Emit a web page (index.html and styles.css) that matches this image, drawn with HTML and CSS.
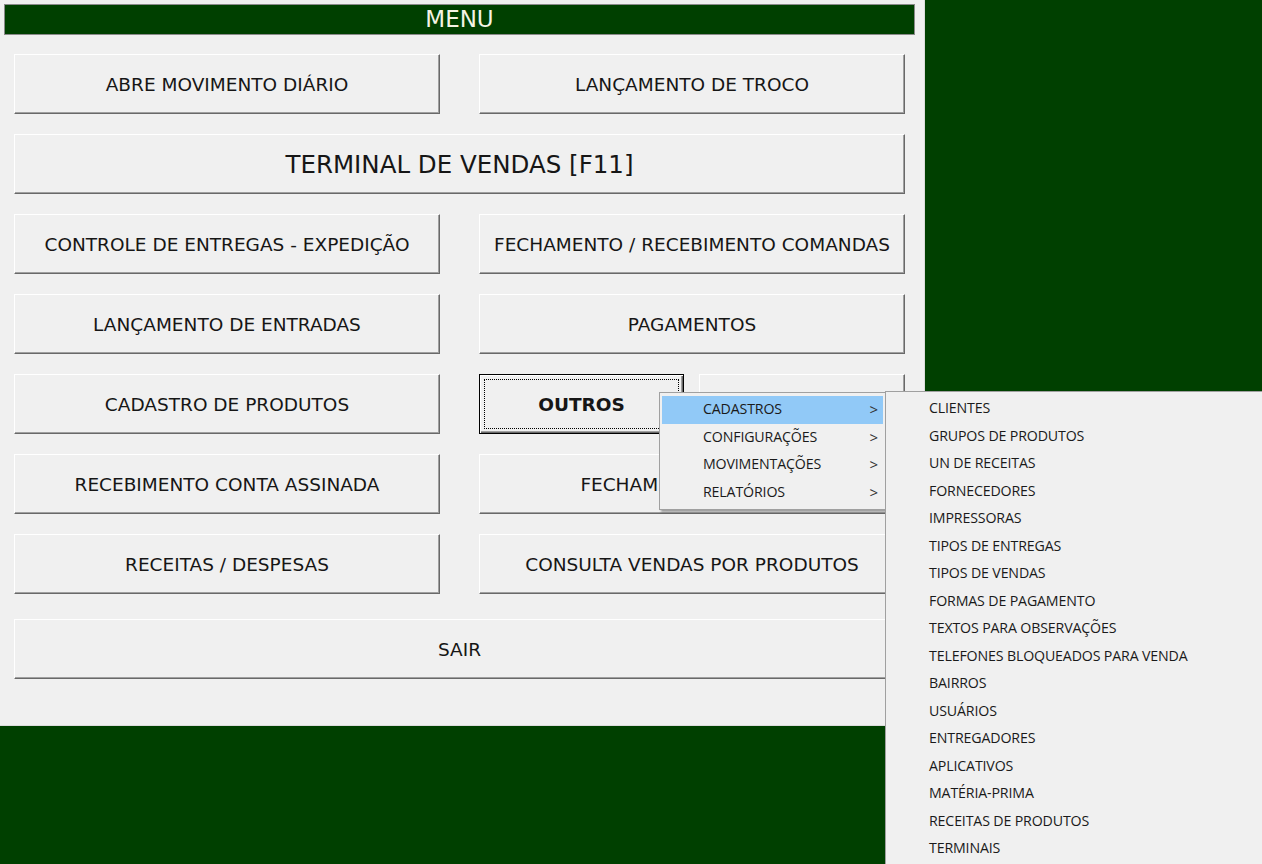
FILE: index.html
```html
<!DOCTYPE html>
<html lang="pt-BR">
<head>
<meta charset="utf-8">
<title>MENU</title>
<link rel="stylesheet" href="styles.css">
</head>
<body>
<div class="form">
  <div class="title">MENU</div>
  <div class="buttons">
    <div class="row">
      <button class="btn">ABRE MOVIMENTO DIÁRIO</button>
      <button class="btn">LANÇAMENTO DE TROCO</button>
    </div>
    <div class="row">
      <button class="btn wide big">TERMINAL DE VENDAS [F11]</button>
    </div>
    <div class="row">
      <button class="btn">CONTROLE DE ENTREGAS - EXPEDIÇÃO</button>
      <button class="btn">FECHAMENTO / RECEBIMENTO COMANDAS</button>
    </div>
    <div class="row">
      <button class="btn">LANÇAMENTO DE ENTRADAS</button>
      <button class="btn">PAGAMENTOS</button>
    </div>
    <div class="row">
      <button class="btn">CADASTRO DE PRODUTOS</button>
      <div class="pair">
        <button class="btn half focus"><span class="focus-rect">OUTROS</span></button>
        <button class="btn half"></button>
      </div>
    </div>
    <div class="row">
      <button class="btn">RECEBIMENTO CONTA ASSINADA</button>
      <button class="btn">FECHAMENTO DE CAIXA</button>
    </div>
    <div class="row">
      <button class="btn">RECEITAS / DESPESAS</button>
      <button class="btn">CONSULTA VENDAS POR PRODUTOS</button>
    </div>
    <div class="row exit">
      <button class="btn wide">SAIR</button>
    </div>
  </div>
</div>

<ul class="menu menu-main">
  <li class="item active"><span>CADASTROS</span><span class="arrow">&gt;</span></li>
  <li class="item"><span>CONFIGURAÇÕES</span><span class="arrow">&gt;</span></li>
  <li class="item"><span>MOVIMENTAÇÕES</span><span class="arrow">&gt;</span></li>
  <li class="item"><span>RELATÓRIOS</span><span class="arrow">&gt;</span></li>
</ul>

<ul class="menu menu-sub">
  <li class="item">CLIENTES</li>
  <li class="item">GRUPOS DE PRODUTOS</li>
  <li class="item">UN DE RECEITAS</li>
  <li class="item">FORNECEDORES</li>
  <li class="item">IMPRESSORAS</li>
  <li class="item">TIPOS DE ENTREGAS</li>
  <li class="item">TIPOS DE VENDAS</li>
  <li class="item">FORMAS DE PAGAMENTO</li>
  <li class="item">TEXTOS PARA OBSERVAÇÕES</li>
  <li class="item">TELEFONES BLOQUEADOS PARA VENDA</li>
  <li class="item">BAIRROS</li>
  <li class="item">USUÁRIOS</li>
  <li class="item">ENTREGADORES</li>
  <li class="item">APLICATIVOS</li>
  <li class="item">MATÉRIA-PRIMA</li>
  <li class="item">RECEITAS DE PRODUTOS</li>
  <li class="item">TERMINAIS</li>
</ul>
</body>
</html>
```

FILE: styles.css
```css
html, body {
  margin: 0;
  padding: 0;
  width: 1262px;
  height: 864px;
  overflow: hidden;
  background: #004000;
  font-family: "DejaVu Sans", Verdana, sans-serif;
}

.form {
  width: 925px;
  height: 726px;
  box-sizing: border-box;
  background: #f0f0f0;
  padding: 4px 0 0 4px;
  border-right: 1px solid #dcdcdc;
  border-bottom: 1px solid #dcdcdc;
}

.title {
  width: 911px;
  height: 31px;
  box-sizing: border-box;
  background: #004000;
  border: 1px solid #8a8a8a;
  color: #f4f4e4;
  font-size: 23px;
  line-height: 29px;
  text-align: center;
}

.buttons {
  display: flex;
  flex-direction: column;
  gap: 20px;
  margin: 19px 0 0 10px;
  width: 891px;
}

.row {
  display: flex;
  gap: 39px;
  height: 60px;
}

.row.exit {
  margin-top: 5px;
}

.pair {
  display: flex;
  gap: 15px;
  width: 426px;
}

.btn {
  width: 426px;
  height: 60px;
  box-sizing: border-box;
  margin: 0;
  padding: 0;
  background: #f0f0f0;
  border-top: 1px solid #ffffff;
  border-left: 1px solid #ffffff;
  border-right: 1px solid #696969;
  border-bottom: 1px solid #696969;
  box-shadow: inset -1px -1px 0 #a0a0a0;
  font-family: "DejaVu Sans", Verdana, sans-serif;
  font-size: 18.5px;
  color: #161616;
  white-space: nowrap;
}

.btn.wide {
  width: 891px;
}

.btn.big {
  font-size: 24.5px;
}

.btn.half {
  width: 205px;
  flex: none;
}

.btn.half + .btn.half {
  width: 206px;
}

.btn.focus {
  border: 1px solid #000;
  box-shadow: inset 1px 1px 0 #fff, inset -1px -1px 0 #696969, inset -2px -2px 0 #a0a0a0;
  padding: 4px;
  font-weight: bold;
  font-size: 18.5px;
}

.focus-rect {
  display: flex;
  align-items: center;
  justify-content: center;
  width: 100%;
  height: 100%;
  box-sizing: border-box;
  border: 1px dotted #000;
}

.menu {
  position: absolute;
  margin: 0;
  padding: 3px 2px;
  list-style: none;
  background: #f0f0f0;
  border: 1px solid #a0a0a0;
  box-sizing: border-box;
  font-family: "Open Sans", "Noto Sans", sans-serif;
  font-size: 14.2px;
  letter-spacing: -0.15px;
  color: #1a1a1a;
}

.menu-main {
  left: 659px;
  top: 392px;
  width: 227px;
  height: 118px;
  box-shadow: 2px 2px 2px rgba(0, 0, 0, 0.35);
}

.menu-sub {
  left: 885px;
  top: 391px;
  width: 420px;
  height: 490px;
  box-shadow: 2px 2px 2px rgba(0, 0, 0, 0.35);
}

.item {
  height: 27.5px;
  box-sizing: border-box;
  line-height: 26px;
  padding-bottom: 1.5px;
  padding-left: 41px;
  white-space: nowrap;
}

.menu-main .item {
  display: flex;
  justify-content: space-between;
  padding-right: 5px;
}

.menu-main .item.active {
  background: #91c9f7;
}

.arrow {
  font-family: "Open Sans", sans-serif;
  font-size: 15px;
  color: #333;
}
```
